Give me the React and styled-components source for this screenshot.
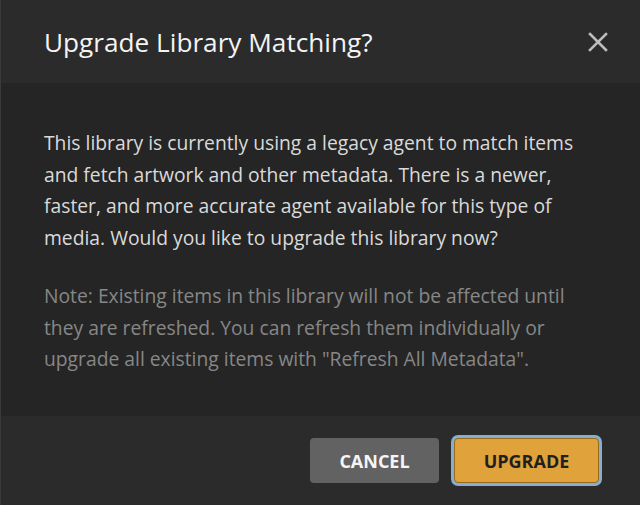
import React from 'react';
import styled, { createGlobalStyle } from 'styled-components';

const GlobalStyle = createGlobalStyle`
  html, body {
    margin: 0;
    padding: 0;
    background: #252525;
  }
  * { box-sizing: border-box; }
`;

const Modal = styled.div`
  width: 640px;
  height: 505px;
  display: flex;
  flex-direction: column;
  font-family: "Open Sans", "Liberation Sans", sans-serif;
  border-left: 1px solid #3a3a3a;
  background: #252525;
`;

const Header = styled.div`
  height: 83px;
  flex: none;
  display: flex;
  align-items: center;
  justify-content: space-between;
  padding: 0 27px 0 43px;
  background: #2b2b2b;
`;

const Title = styled.h2`
  margin: 0;
  font-size: 26.2px;
  font-weight: 400;
  color: #f4f4f4;
`;

const CloseButton = styled.button`
  width: 30px;
  height: 30px;
  display: flex;
  align-items: center;
  justify-content: center;
  padding: 0;
  border: none;
  background: none;
  color: #bdbdbd;
  cursor: pointer;
`;

const Body = styled.div`
  flex: 1;
  padding: 44px 50px 0 43px;
  background: #252525;
`;

const Paragraph = styled.p`
  margin: 0 0 27px;
  font-size: 19.3px;
  line-height: 31.5px;
  color: ${p => (p.$muted ? '#878787' : '#dadada')};
`;

const Footer = styled.div`
  height: 89px;
  flex: none;
  display: flex;
  align-items: center;
  justify-content: flex-end;
  gap: 15px;
  padding: 0 41px 0 0;
  background: #2b2b2b;
`;

const Button = styled.button`
  height: 45px;
  padding: 0;
  width: ${p => (p.$primary ? '145px' : '129px')};
  border-radius: 4px;
  font-family: "Open Sans", "Liberation Sans", sans-serif;
  font-size: 18px;
  font-weight: 700;
  text-transform: uppercase;
  cursor: pointer;
  background: ${p => (p.$primary ? '#e0a23a' : '#626262')};
  color: ${p => (p.$primary ? '#1f1f1f' : '#f5f5f5')};
  border: ${p => (p.$primary ? '1px solid #9a6a1c' : 'none')};
  box-shadow: ${p => (p.$primary ? '0 0 0 3px #86aed0' : 'none')};
`;

export default function App() {
  return (
    <>
      <GlobalStyle />
      <Modal>
        <Header>
          <Title>Upgrade Library Matching?</Title>
          <CloseButton aria-label="Close">
            <svg width="20" height="20" viewBox="0 0 20 20">
              <path d="M2 2 L18 18 M18 2 L2 18" stroke="currentColor" strokeWidth="2.6" strokeLinecap="square" />
            </svg>
          </CloseButton>
        </Header>
        <Body>
          <Paragraph>
            This library is currently using a legacy agent to match items and fetch artwork and other metadata. There is a newer, faster, and more accurate agent available for this type of media. Would you like to upgrade this library now?
          </Paragraph>
          <Paragraph $muted>
            Note: Existing items in this library will not be affected until they are refreshed. You can refresh them individually or upgrade all existing items with "Refresh All Metadata".
          </Paragraph>
        </Body>
        <Footer>
          <Button>Cancel</Button>
          <Button $primary>Upgrade</Button>
        </Footer>
      </Modal>
    </>
  );
}
